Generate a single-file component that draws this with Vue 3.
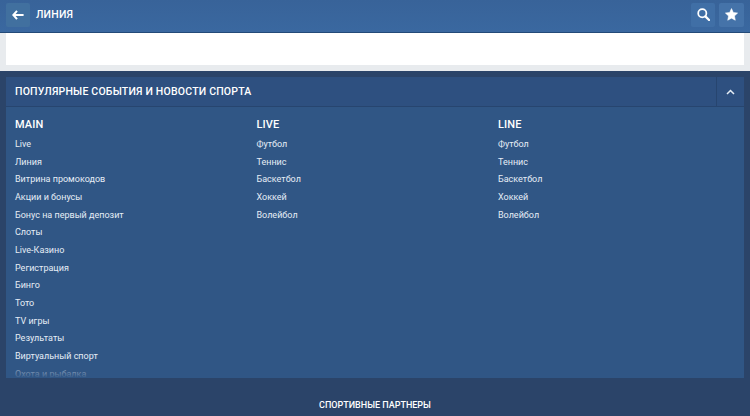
<script setup>
const main = ['Live','Линия','Витрина промокодов','Акции и бонусы','Бонус на первый депозит','Слоты','Live-Казино','Регистрация','Бинго','Тото','TV игры','Результаты','Виртуальный спорт','Охота и рыбалка']
const sports = ['Футбол','Теннис','Баскетбол','Хоккей','Волейбол']
const columns = [
  { title: 'MAIN', items: main },
  { title: 'LIVE', items: sports },
  { title: 'LINE', items: sports },
]
</script>

<template>
  <div class="page">
    <header class="topbar">
      <button class="btn back" aria-label="Назад">
        <svg width="12" height="10" viewBox="0 0 12 10"><path d="M5 .8 1.300 5 5 9.200M1.800 5H11.600" fill="none" stroke="#fff" stroke-width="2"/></svg>
      </button>
      <span class="title">ЛИНИЯ</span>
      <button class="btn search" aria-label="Поиск">
        <svg width="13" height="13" viewBox="0 0 14 14"><circle cx="5.700" cy="5.700" r="4.400" fill="none" stroke="#fff" stroke-width="1.900"/><path d="m9 9 4 4" stroke="#fff" stroke-width="2.400" stroke-linecap="round"/></svg>
      </button>
      <button class="btn star" aria-label="Избранное">
        <svg width="13" height="13" viewBox="0 0 24 24"><path d="m12 1 3.400 7.300 7.900 1-5.800 5.400 1.500 7.900-7-3.900-7 3.900 1.500-7.900L.7 9.300l7.900-1z" fill="#fff" stroke="#fff" stroke-linejoin="round"/></svg>
      </button>
    </header>
    <div class="banner-wrap"><div class="banner"></div></div>
    <main class="content">
      <section class="card">
        <div class="card-head">
          <h2>ПОПУЛЯРНЫЕ СОБЫТИЯ И НОВОСТИ СПОРТА</h2>
          <div class="toggle">
            <svg width="9" height="6" viewBox="0 0 9 6"><path d="M1 5 4.500 1.500 8 5" fill="none" stroke="#e5edf5" stroke-width="1.500"/></svg>
          </div>
        </div>
        <div class="links">
          <div v-for="col in columns" :key="col.title" class="col">
            <h3>{{ col.title }}</h3>
            <a v-for="item in col.items" :key="item">{{ item }}</a>
          </div>
          <div class="fade"></div>
        </div>
      </section>
    </main>
    <footer class="partners">СПОРТИВНЫЕ ПАРТНЕРЫ</footer>
  </div>
</template>

<style>
html, body { margin: 0; background: #2b4469; }
</style>

<style scoped>
.page { width: 750px; height: 416px; overflow: hidden; display: flex; flex-direction: column; font-family: Roboto, "Noto Sans", sans-serif; background: #2b4469; color: #fff; }
.topbar { height: 33px; box-sizing: border-box; flex: none; display: flex; align-items: center; gap: 4px; padding: 0 6px 3px; background: linear-gradient(#386399, #3a68a0); border-bottom: 1px solid #244a78; }
.btn { width: 24px; height: 24px; padding: 0; border: 0; border-radius: 2px; background: #4573a9; display: flex; align-items: center; justify-content: center; }
.back { background: #41709f; }
.star { width: 25px; }
.title { flex: 1; margin-left: 2px; font-size: 10.500px; font-weight: 500; letter-spacing: .2px; }
.search { background: #406fa6; }
.banner-wrap { height: 32px; flex: none; padding: 0 6px; background: #e8ebee; border-bottom: 6px solid #e8ebee; box-sizing: content-box; }
.banner { height: 32px; background: #fff; }
.content { flex: 1; min-height: 0; padding: 6px 6px 0; background: #2b4469; }
.card { height: 301px; overflow: hidden; background: #305685; }
.card-head { height: 30px; box-sizing: border-box; display: flex; align-items: center; justify-content: space-between; padding-left: 9px; background: #2e5080; border-bottom: 1px solid #27456f; }
h2 { margin: 0; font-size: 10.500px; font-weight: 500; letter-spacing: .2px; }
.toggle { width: 28px; height: 29px; display: flex; align-items: center; justify-content: center; border-left: 1px solid #27456f; box-sizing: border-box; }
.links { position: relative; height: 271px; display: grid; grid-template-columns: 241.500px 241.500px 1fr; padding: 10px 9px 0; box-sizing: border-box; }
.col { display: flex; flex-direction: column; align-items: flex-start; }
h3 { margin: 0 0 4px; font-size: 11px; line-height: 15px; font-weight: 500; letter-spacing: .1px; }
a { font-size: 9px; line-height: 17.650px; color: #e6edf6; }
.fade { position: absolute; left: 0; right: 0; bottom: 0; height: 14px; background: linear-gradient(rgba(48,86,133,.4), rgba(48,86,133,.7) 70%, #305685); }
.partners { height: 38px; box-sizing: border-box; padding-top: 16px; flex: none; display: flex; align-items: center; justify-content: center; font-size: 9px; font-weight: 500; background: #2b4469; }
</style>
